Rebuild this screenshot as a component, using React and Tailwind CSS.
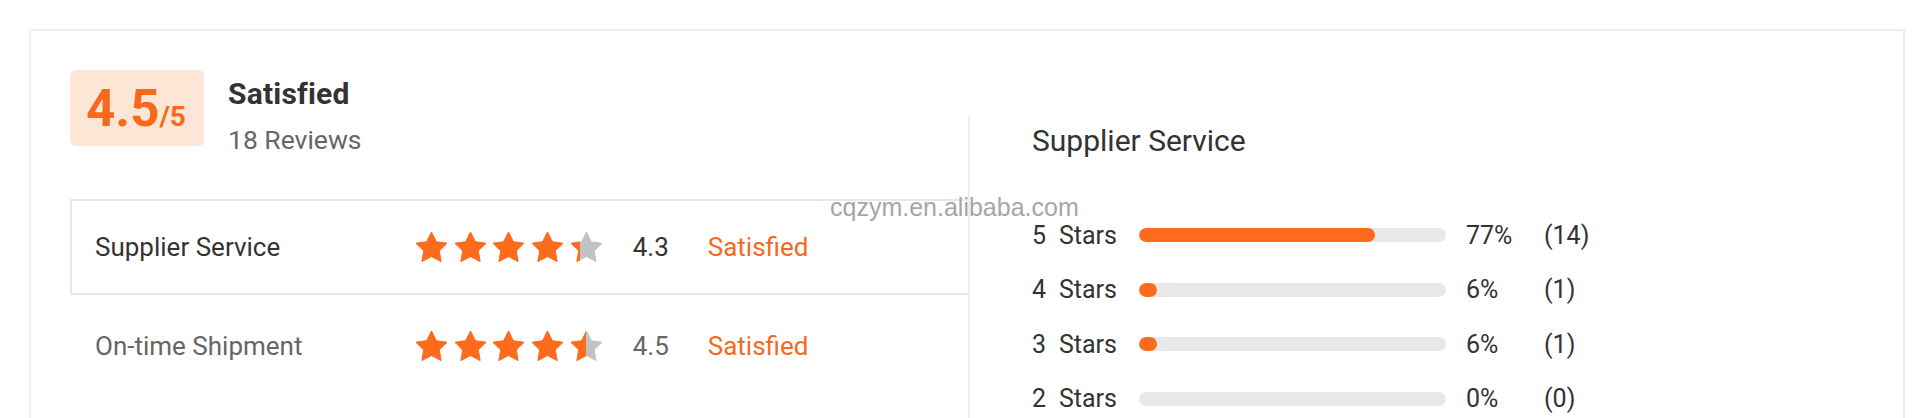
import React from 'react';

const ratings = [
  { label: 'Supplier Service', score: 4.3, active: true },
  { label: 'On-time Shipment', score: 4.5, active: false },
];

const distribution = [
  { stars: 5, pct: 77, count: 14 },
  { stars: 4, pct: 6, count: 1 },
  { stars: 3, pct: 6, count: 1 },
  { stars: 2, pct: 0, count: 0 },
  { stars: 1, pct: 11, count: 2 },
];

const StarShape = ({ color }) => (
  <svg width="31" height="30" viewBox="2 2 20 19.3" className="block">
    <polygon
      points="12,2 15.09,8.26 22,9.27 17,14.14 18.18,21.02 12,17.77 5.82,21.02 7,14.14 2,9.27 8.91,8.26"
      fill={color}
      stroke={color}
      strokeWidth="0.6"
      strokeLinejoin="round"
    />
  </svg>
);

const Star = ({ fill }) => (
  <div className="relative w-[31px] h-[30px] shrink-0">
    <StarShape color="#c2c2c2" />
    {fill > 0 && (
      <div className="absolute left-0 top-0 h-[30px] overflow-hidden" style={{ width: `${fill * 31}px` }}>
        <StarShape color="#ff6b1a" />
      </div>
    )}
  </div>
);

const Stars = ({ score }) => {
  const partial = score % 1 === 0.5 ? 0.5 : 0.3;
  return (
    <div className="flex gap-[7.7px]">
      {[0, 1, 2, 3, 4].map((i) => (
        <Star key={i} fill={i < Math.floor(score) ? 1 : partial} />
      ))}
    </div>
  );
};

export default function App() {
  return (
    <div className="relative h-[418px] overflow-hidden bg-white font-['Roboto',sans-serif] pl-[29px] pt-[29px] pr-[7px]">
      <div className="flex border-2 border-[#ececec] h-[560px]">
        {/* left column: overall score + per-category rows */}
        <div className="w-[937px] shrink-0 pl-[39px] pt-[39px]">
          <div className="flex gap-[24px]">
            <div className="w-[134px] h-[76px] rounded-[6px] bg-[#fde6d6] flex items-center justify-center pr-[2px]">
              <span className="text-[51px] leading-none font-bold text-[#f7691c]">
                4.5<span className="text-[28px]">/5</span>
              </span>
            </div>
            <div className="pt-[6px]">
              <div className="text-[30px] leading-[36px] font-bold text-[#333333] tracking-[0.2px]">Satisfied</div>
              <div className="mt-[13px] text-[26.5px] leading-[30px] text-[#666666]">18 Reviews</div>
            </div>
          </div>

          <div className="mt-[44px]">
            {ratings.map((r) => (
              <div
                key={r.label}
                className={`flex items-center pl-[23px] text-[26px] border-2 border-r-0 ${
                  r.active ? 'h-[96px] border-[#e8e8e8] text-[#333333]' : 'h-[102px] border-transparent text-[#666666]'
                }`}
              >
                <div className="w-[321px]">{r.label}</div>
                <Stars score={r.score} />
                <div className="ml-[31px] w-[75px]">{r.score}</div>
                <div className="text-[#f5691e]">Satisfied</div>
              </div>
            ))}
          </div>
        </div>

        {/* right column: star distribution */}
        <div className="flex-1 mt-[85px] border-l-2 border-[#ececec] pl-[62px] pt-[8px] text-[#333333]">
          <div className="text-[30px] leading-[34px]">Supplier Service</div>
          <div className="mt-[50px]">
            {distribution.map((d) => (
              <div key={d.stars} className="h-[54.5px] flex items-center text-[25px]">
                <span className="w-[27px]">{d.stars}</span>
                <span className="w-[80px]">Stars</span>
                <div className="w-[307px] h-[14px] rounded-full bg-[#e8e8e8] overflow-hidden">
                  <div
                    className="h-full rounded-full bg-[#ff6b1a]"
                    style={{ width: d.pct === 0 ? 0 : `${Math.max(d.pct, 6)}%` }}
                  />
                </div>
                <span className="ml-[20px] w-[78px]">{d.pct}%</span>
                <span>({d.count})</span>
              </div>
            ))}
          </div>
        </div>
      </div>

      {/* site watermark */}
      <div className="absolute left-[830px] top-[195px] text-[25px] leading-none font-['Liberation_Sans',Arial,sans-serif] text-[#a6a6a6] [text-shadow:0_0_2px_#ffffff]">
        cqzym.en.alibaba.com
      </div>
    </div>
  );
}
